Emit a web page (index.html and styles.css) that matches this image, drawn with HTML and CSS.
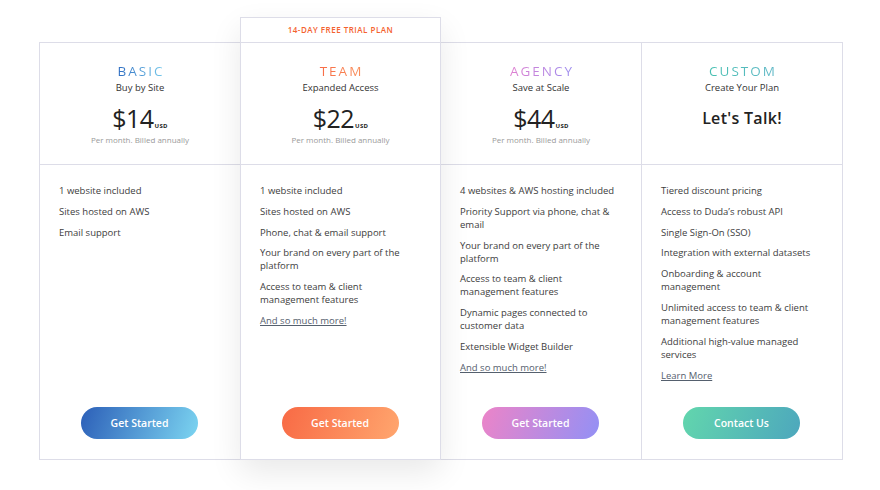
FILE: index.html
```html
<!DOCTYPE html>
<html lang="en">
<head>
<meta charset="utf-8">
<title>Pricing</title>
<link rel="stylesheet" href="styles.css">
</head>
<body>
<div class="pricing">
  <div class="plan">
    <div class="head">
      <div class="name basic">BASIC</div>
      <div class="sub">Buy by Site</div>
      <div class="price">$14<span class="usd">USD</span></div>
      <div class="note">Per month. Billed annually</div>
    </div>
    <div class="body">
      <ul class="features">
        <li>1 website included</li>
        <li>Sites hosted on AWS</li>
        <li>Email support</li>
      </ul>
      <a class="btn btn-basic">Get Started</a>
    </div>
  </div>
  <div class="plan featured">
    <div class="trial">14-DAY FREE TRIAL PLAN</div>
    <div class="head">
      <div class="name team">TEAM</div>
      <div class="sub">Expanded Access</div>
      <div class="price">$22<span class="usd">USD</span></div>
      <div class="note">Per month. Billed annually</div>
    </div>
    <div class="body">
      <ul class="features">
        <li>1 website included</li>
        <li>Sites hosted on AWS</li>
        <li>Phone, chat &amp; email support</li>
        <li>Your brand on every part of the platform</li>
        <li>Access to team &amp; client management features</li>
        <li><a class="more">And so much more!</a></li>
      </ul>
      <a class="btn btn-team">Get Started</a>
    </div>
  </div>
  <div class="plan">
    <div class="head">
      <div class="name agency">AGENCY</div>
      <div class="sub">Save at Scale</div>
      <div class="price">$44<span class="usd">USD</span></div>
      <div class="note">Per month. Billed annually</div>
    </div>
    <div class="body">
      <ul class="features">
        <li>4 websites &amp; AWS hosting included</li>
        <li>Priority Support via phone, chat &amp; email</li>
        <li>Your brand on every part of the platform</li>
        <li>Access to team &amp; client management features</li>
        <li>Dynamic pages connected to customer data</li>
        <li>Extensible Widget Builder</li>
        <li><a class="more">And so much more!</a></li>
      </ul>
      <a class="btn btn-agency">Get Started</a>
    </div>
  </div>
  <div class="plan">
    <div class="head">
      <div class="name custom">CUSTOM</div>
      <div class="sub">Create Your Plan</div>
      <div class="talk">Let's Talk!</div>
    </div>
    <div class="body">
      <ul class="features">
        <li>Tiered discount pricing</li>
        <li>Access to Duda’s robust API</li>
        <li>Single Sign-On (SSO)</li>
        <li>Integration with external datasets</li>
        <li>Onboarding &amp; account management</li>
        <li>Unlimited access to team &amp; client management features</li>
        <li>Additional high-value managed services</li>
        <li><a class="more">Learn More</a></li>
      </ul>
      <a class="btn btn-custom">Contact Us</a>
    </div>
  </div>
</div>
</body>
</html>
```
FILE: styles.css
```css
* { box-sizing: border-box; }
html, body { margin: 0; padding: 0; background: #fff; }
body {
  font-family: "Open Sans", "Liberation Sans", sans-serif;
  color: #3a3a3a;
  width: 880px;
  height: 490px;
  overflow: hidden;
}
.pricing {
  margin: 42px 0 0 39px;
  width: 804px;
  height: 418px;
  display: grid;
  grid-template-columns: 201px 200px 201px 200px;
  border: 1px solid #dddde8;
}
.plan {
  display: flex;
  flex-direction: column;
  border-right: 1px solid #dddde8;
  background: #fff;
}
.plan:last-child { border-right: none; }
.featured {
  margin-top: -26px;
  margin-bottom: -1px;
  border: 1px solid #dddde8;
  margin-left: -1px;
  box-shadow: 0 12px 30px rgba(0, 0, 0, 0.09);
  position: relative;
  z-index: 1;
}
.trial {
  height: 25px;
  border-bottom: 1px solid #dddde8;
  text-align: center;
  font-size: 8px;
  font-weight: 600;
  letter-spacing: 0.5px;
  color: #f4622f;
  line-height: 24px;
}
.head {
  height: 122px;
  border-bottom: 1px solid #dddde8;
  text-align: center;
  padding-top: 16px;
}
.name {
  font-size: 13.5px;
  letter-spacing: 2px;
  line-height: 18px;
  display: inline-block;
  -webkit-background-clip: text;
  background-clip: text;
  color: transparent;
  padding-left: 2px;
}
.basic { background-image: linear-gradient(90deg, #2d6ac0, #78cbec); }
.team { background-image: linear-gradient(90deg, #f86a45, #f9915c); }
.agency { background-image: linear-gradient(90deg, #e27fcf, #9a8df0); }
.custom { background-image: linear-gradient(90deg, #46c0b0, #62b8c8); }
.sub {
  font-size: 9.5px;
  font-weight: 500;
  color: #333;
  line-height: 14px;
  margin-top: 0;
}
.price {
  font-size: 25px;
  line-height: 26px;
  margin-top: 10px;
  color: #222;
  font-weight: 400;
  letter-spacing: -0.5px;
}
.usd {
  font-size: 6px;
  font-weight: 700;
  letter-spacing: 0.3px;
  margin-left: 1px;
}
.note {
  font-size: 8px;
  color: #9a9a9a;
  line-height: 12px;
  margin-top: -5px;
}
.talk {
  font-size: 16px;
  font-weight: 600;
  color: #222;
  margin-top: 13px;
  line-height: 20px;
  letter-spacing: 0.3px;
}
.body {
  flex: 1;
  display: flex;
  flex-direction: column;
  padding: 19px 20px 20px 19px;
}
.features {
  list-style: none;
  margin: 0;
  padding: 0;
  flex: 1;
}
.features li {
  font-size: 9.5px;
  line-height: 13px;
  margin-bottom: 7.8px;
  color: #3d3d3d;
}
.more {
  color: #55606e;
  text-decoration: underline;
}
.btn {
  align-self: center;
  width: 117px;
  height: 32px;
  border-radius: 16px;
  color: #fff;
  font-size: 10.5px;
  font-weight: 600;
  line-height: 32px;
  text-align: center;
  text-decoration: none;
}
.btn-basic { background: linear-gradient(110deg, #2c5fb8, #7cd5f1); }
.btn-team { background: linear-gradient(110deg, #f86a45, #ffa66e); }
.btn-agency { background: linear-gradient(110deg, #ec84c8, #9390f5); }
.btn-custom { background: linear-gradient(110deg, #62d6ad, #4da7bd); }
```
